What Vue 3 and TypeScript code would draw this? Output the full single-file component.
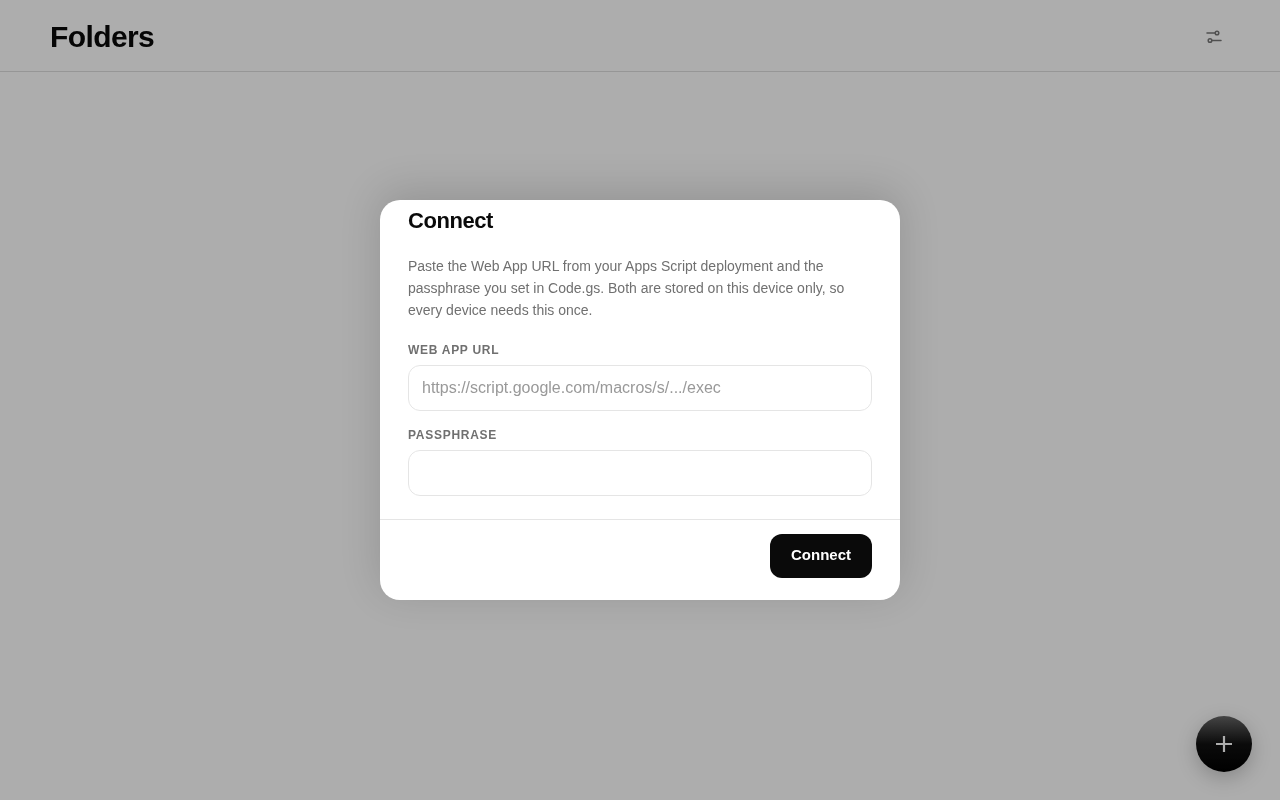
<script setup lang="ts">
const title: string = 'Connect'
</script>

<template>
  <div class="page">
    <header class="top">
      <h1 class="heading">Folders</h1>
      <button class="tune" aria-label="Settings">
        <svg width="22" height="22" viewBox="0 0 22 22" fill="none" stroke="#777" stroke-width="1.5" stroke-linecap="round">
          <path d="M5 7h8.2" />
          <circle cx="15" cy="7" r="1.8" />
          <path d="M9.8 14.5H19" />
          <circle cx="8" cy="14.5" r="1.8" />
        </svg>
      </button>
    </header>
    <button class="fab" aria-label="Add">
      <svg width="22" height="22" viewBox="0 0 22 22" fill="none" stroke="#fff" stroke-width="2.2">
        <path d="M11 3v16M3 11h16" />
      </svg>
    </button>
    <div class="overlay">
      <section class="modal">
        <div class="body">
          <h2 class="title">{{ title }}</h2>
          <p class="desc">Paste the Web App URL from your Apps Script deployment and the passphrase you set in Code.gs. Both are stored on this device only, so every device needs this once.</p>
          <label class="label">WEB APP URL</label>
          <input class="field" type="text" placeholder="https://script.google.com/macros/s/.../exec" />
          <label class="label second">PASSPHRASE</label>
          <input class="field" type="password" />
        </div>
        <footer class="foot">
          <button class="primary">Connect</button>
        </footer>
      </section>
    </div>
  </div>
</template>

<style>
html, body { margin: 0; background: #fff; }
</style>

<style scoped>
.page {
  height: 800px;
  font-family: "Liberation Sans", Arial, sans-serif;
  background: #ffffff;
  position: relative;
  overflow: hidden;
}
.top {
  height: 69px;
  box-sizing: content-box;
  border-bottom: 1px solid #dedede;
  display: flex;
  align-items: center;
  justify-content: space-between;
  padding: 2px 56px 0 50px;
  will-change: transform;
}
.heading {
  margin: 0;
  font-size: 30px;
  font-weight: 700;
  letter-spacing: -0.6px;
  color: #0a0a0a;
}
.tune {
  width: 22px;
  height: 22px;
  padding: 0;
  border: 0;
  background: none;
  display: block;
}
.fab {
  position: absolute;
  left: 1196px;
  top: 716px;
  width: 56px;
  height: 56px;
  padding: 0;
  border: 0;
  border-radius: 50%;
  background: linear-gradient(180deg, #666 0%, #111 50%, #000 100%);
  box-shadow: 0 6px 20px rgba(0, 0, 0, 0.22);
  display: flex;
  align-items: center;
  justify-content: center;
}
.overlay {
  position: fixed;
  inset: 0;
  background: rgba(0, 0, 0, 0.32);
  display: flex;
  align-items: center;
  justify-content: center;
}
.modal {
  width: 520px;
  height: 400px;
  background: #fff;
  border-radius: 20px;
  box-shadow: 0 -8px 40px rgba(0, 0, 0, 0.15);
  display: flex;
  flex-direction: column;
  overflow: hidden;
  will-change: transform;
}
.body {
  flex: 1;
  padding: 8px 28px 0;
  display: flex;
  flex-direction: column;
  min-height: 0;
}
.title {
  margin: 0;
  font-size: 22px;
  line-height: 26px;
  font-weight: 700;
  letter-spacing: -0.44px;
  color: #0a0a0a;
}
.desc {
  margin: 21px 0 0;
  font-size: 14px;
  line-height: 22px;
  color: #707070;
}
.label {
  margin-top: 22px;
  font-size: 12px;
  line-height: 14px;
  font-weight: 700;
  letter-spacing: 0.72px;
  color: #707070;
}
.label.second { margin-top: 17px; }
.field {
  margin-top: 8px;
  height: 46px;
  box-sizing: border-box;
  width: 100%;
  padding: 0 13px;
  border: 1px solid #e5e5e5;
  border-radius: 12px;
  outline: none;
  background: #fff;
  font-family: inherit;
  font-size: 16px;
  color: #0a0a0a;
}
.field::placeholder { color: #999; opacity: 1; }
.foot {
  height: 81px;
  box-sizing: border-box;
  border-top: 1px solid #e5e5e5;
  padding: 14px 28px 0;
  display: flex;
  justify-content: flex-end;
  align-items: flex-start;
}
.primary {
  width: 102px;
  height: 44px;
  padding: 0 0 4px;
  border: 0;
  border-radius: 12px;
  background: #0a0a0a;
  color: #fff;
  font-family: inherit;
  font-size: 15px;
  font-weight: 700;
}
</style>
